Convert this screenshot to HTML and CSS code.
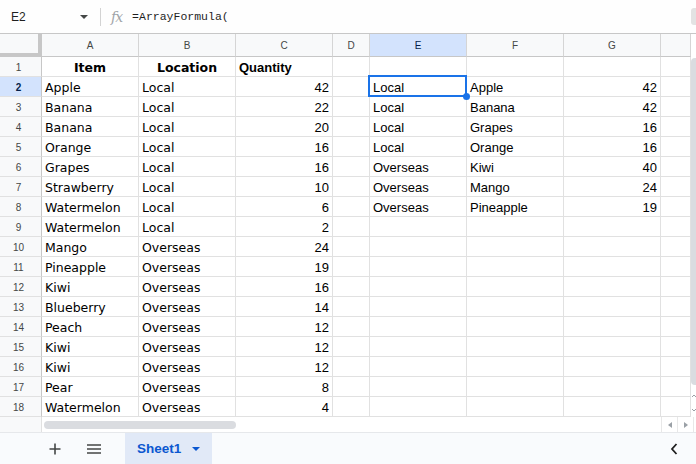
FILE: index.html
```html
<!DOCTYPE html>
<html>
<head>
<meta charset="utf-8">
<link rel="stylesheet" href="styles.css">
</head>
<body>
<div class="app">
  <div class="fbar">
    <div class="namebox">
      <span class="ref">E2</span>
      <svg class="caret" width="8" height="4" viewBox="0 0 8 4"><path d="M0 0h8L4 4z" fill="#444746"/></svg>
    </div>
    <div class="sep"></div>
    <span class="fx">fx</span>
    <span class="formula">=ArrayFormula(</span>
    <div class="fbar-end"></div>
  </div>
  <div class="sheet">
    <div class="grid">
      <div class="corner"></div>
      <div class="h">A</div><div class="h">B</div><div class="h">C</div><div class="h">D</div><div class="h hl">E</div><div class="h">F</div><div class="h">G</div><div class="h"></div>

      <div class="rh">1</div><div class="c v b ctr">Item</div><div class="c v b ctr">Location</div><div class="c a b">Quantity</div><div class="c"></div><div class="c"></div><div class="c"></div><div class="c"></div><div class="c"></div>

      <div class="rh rhl">2</div><div class="c v">Apple</div><div class="c v">Local</div><div class="c n">42</div><div class="c"></div><div class="c a sel">Local</div><div class="c a">Apple</div><div class="c n">42</div><div class="c"></div>
      <div class="rh">3</div><div class="c v">Banana</div><div class="c v">Local</div><div class="c n">22</div><div class="c"></div><div class="c a">Local</div><div class="c a">Banana</div><div class="c n">42</div><div class="c"></div>
      <div class="rh">4</div><div class="c v">Banana</div><div class="c v">Local</div><div class="c n">20</div><div class="c"></div><div class="c a">Local</div><div class="c a">Grapes</div><div class="c n">16</div><div class="c"></div>
      <div class="rh">5</div><div class="c v">Orange</div><div class="c v">Local</div><div class="c n">16</div><div class="c"></div><div class="c a">Local</div><div class="c a">Orange</div><div class="c n">16</div><div class="c"></div>
      <div class="rh">6</div><div class="c v">Grapes</div><div class="c v">Local</div><div class="c n">16</div><div class="c"></div><div class="c a">Overseas</div><div class="c a">Kiwi</div><div class="c n">40</div><div class="c"></div>
      <div class="rh">7</div><div class="c v">Strawberry</div><div class="c v">Local</div><div class="c n">10</div><div class="c"></div><div class="c a">Overseas</div><div class="c a">Mango</div><div class="c n">24</div><div class="c"></div>
      <div class="rh">8</div><div class="c v">Watermelon</div><div class="c v">Local</div><div class="c n">6</div><div class="c"></div><div class="c a">Overseas</div><div class="c a">Pineapple</div><div class="c n">19</div><div class="c"></div>
      <div class="rh">9</div><div class="c v">Watermelon</div><div class="c v">Local</div><div class="c n">2</div><div class="c"></div><div class="c"></div><div class="c"></div><div class="c"></div><div class="c"></div>
      <div class="rh">10</div><div class="c v">Mango</div><div class="c v">Overseas</div><div class="c n">24</div><div class="c"></div><div class="c"></div><div class="c"></div><div class="c"></div><div class="c"></div>
      <div class="rh">11</div><div class="c v">Pineapple</div><div class="c v">Overseas</div><div class="c n">19</div><div class="c"></div><div class="c"></div><div class="c"></div><div class="c"></div><div class="c"></div>
      <div class="rh">12</div><div class="c v">Kiwi</div><div class="c v">Overseas</div><div class="c n">16</div><div class="c"></div><div class="c"></div><div class="c"></div><div class="c"></div><div class="c"></div>
      <div class="rh">13</div><div class="c v">Blueberry</div><div class="c v">Overseas</div><div class="c n">14</div><div class="c"></div><div class="c"></div><div class="c"></div><div class="c"></div><div class="c"></div>
      <div class="rh">14</div><div class="c v">Peach</div><div class="c v">Overseas</div><div class="c n">12</div><div class="c"></div><div class="c"></div><div class="c"></div><div class="c"></div><div class="c"></div>
      <div class="rh">15</div><div class="c v">Kiwi</div><div class="c v">Overseas</div><div class="c n">12</div><div class="c"></div><div class="c"></div><div class="c"></div><div class="c"></div><div class="c"></div>
      <div class="rh">16</div><div class="c v">Kiwi</div><div class="c v">Overseas</div><div class="c n">12</div><div class="c"></div><div class="c"></div><div class="c"></div><div class="c"></div><div class="c"></div>
      <div class="rh">17</div><div class="c v">Pear</div><div class="c v">Overseas</div><div class="c n">8</div><div class="c"></div><div class="c"></div><div class="c"></div><div class="c"></div><div class="c"></div>
      <div class="rh">18</div><div class="c v">Watermelon</div><div class="c v">Overseas</div><div class="c n">4</div><div class="c"></div><div class="c"></div><div class="c"></div><div class="c"></div><div class="c"></div>
    </div>
    <div class="vscroll">
      <div class="vthumb"></div>
      <div class="varrows">
        <svg width="5" height="6" viewBox="0 0 5 6"><path d="M1 4l2-2 2 2" fill="none" stroke="#9aa0a6" stroke-width="1"/></svg>
        <svg width="5" height="6" viewBox="0 0 5 6"><path d="M1 2l2 2 2-2" fill="none" stroke="#9aa0a6" stroke-width="1"/></svg>
      </div>
    </div>
  </div>
  <div class="hscroll">
    <div class="hs-left"></div>
    <div class="hs-track"><div class="hthumb"></div></div>
    <div class="hs-btn"><svg width="4" height="6" viewBox="0 0 4 6"><path d="M4 0v6L0 3z" fill="#9aa0a6"/></svg></div>
    <div class="hs-btn"><svg width="4" height="6" viewBox="0 0 4 6"><path d="M0 0v6l4-3z" fill="#9aa0a6"/></svg></div>
    <div class="hs-end"></div>
  </div>
  <div class="tabs">
    <div class="tab-icon plus">
      <svg width="12" height="12" viewBox="0 0 12 12"><path d="M6 0.5v11M0.5 6h11" stroke="#444746" stroke-width="1.6" fill="none"/></svg>
    </div>
    <div class="tab-icon menu">
      <svg width="14" height="10" viewBox="0 0 14 10"><path d="M0 1h14M0 5h14M0 9h14" stroke="#444746" stroke-width="1.5" fill="none"/></svg>
    </div>
    <div class="tab">
      <span class="tab-name">Sheet1</span>
      <svg width="8" height="4" viewBox="0 0 8 4"><path d="M0 0h8L4 4z" fill="#0b57d0"/></svg>
    </div>
    <div class="spacer"></div>
    <div class="chev">
      <svg width="8" height="12" viewBox="0 0 8 12"><path d="M6.5 1L2 6l4.5 5" stroke="#1f1f1f" stroke-width="1.8" fill="none"/></svg>
    </div>
  </div>
</div>
</body>
</html>
```

FILE: styles.css
```css
html, body {
  margin: 0;
  padding: 0;
}
body {
  width: 696px;
  height: 464px;
  overflow: hidden;
  background: #fff;
  font-family: "Liberation Sans", Arial, sans-serif;
  color: #000;
}
.app {
  display: flex;
  flex-direction: column;
  width: 696px;
  height: 464px;
}

/* formula bar */
.fbar {
  height: 33px;
  flex: none;
  border-bottom: 1px solid #c7c7c7;
  display: flex;
  align-items: center;
  background: #fefefe;
  position: relative;
}
.namebox {
  width: 100px;
  box-sizing: border-box;
  padding: 0 12px 0 10px;
  display: flex;
  align-items: center;
  justify-content: space-between;
}
.ref {
  font-size: 12px;
  color: #1f1f1f;
  padding-left: 1px;
}
.caret {
  display: block;
}
.sep {
  width: 1px;
  height: 18px;
  background: #d3d3d3;
}
.fx {
  margin-left: 10px;
  font-family: "DejaVu Serif", serif;
  font-style: italic;
  font-size: 14px;
  color: #a0a4a8;
  letter-spacing: -1px;
}
.formula {
  margin-left: 10px;
  font-family: "Liberation Mono", monospace;
  font-size: 11.5px;
  color: #1f1f1f;
}
.fbar-end {
  position: absolute;
  right: 0;
  top: 8px;
  width: 5px;
  height: 17px;
  background: #e3e3e3;
  border-radius: 3px 0 0 3px;
}

/* sheet */
.sheet {
  display: flex;
  flex: none;
  height: 383px;
}
.grid {
  display: grid;
  grid-template-columns: 42px 97px 97px 97px 37px 97px 97px 97px 30px;
  grid-template-rows: 23px repeat(18, 20px);
  width: 691px;
}
.grid > div {
  box-sizing: border-box;
  border-right: 1px solid #e1e1e1;
  border-bottom: 1px solid #e1e1e1;
  white-space: nowrap;
  overflow: visible;
}
.corner {
  background: #f8f9fa;
  border-right: 4px solid #c7c7c7 !important;
  border-bottom: 4px solid #c7c7c7 !important;
}
.h {
  background: #f8f9fa;
  border-right-color: #d5d5d5 !important;
  border-bottom-color: #c7c7c7 !important;
  font-size: 10px;
  color: #444746;
  display: flex;
  align-items: center;
  justify-content: center;
}
.hl {
  background: #d3e3fd;
  color: #041e49;
}
.rh {
  background: #f8f9fa;
  border-right-color: #c7c7c7 !important;
  font-size: 10px;
  color: #444746;
  display: flex;
  align-items: center;
  justify-content: center;
  padding-right: 4px;
  padding-top: 1px;
}
.rhl {
  background: #d3e3fd;
  color: #041e49;
  font-weight: bold;
}
.c {
  display: flex;
  align-items: flex-end;
  line-height: 16px;
  padding: 0 3px;
}
.v {
  font-family: "DejaVu Sans", Verdana, sans-serif;
  font-size: 12.5px;
}
.a, .n {
  font-family: "Liberation Sans", Arial, sans-serif;
  font-size: 13px;
}
.n {
  justify-content: flex-end;
}
.b {
  font-weight: bold;
}
.ctr {
  justify-content: center;
}
.sel {
  position: relative;
}
.sel::before {
  content: "";
  position: absolute;
  left: -2px;
  top: -2px;
  right: -1px;
  bottom: -1px;
  border: 2px solid #1a73e8;
}
.sel::after {
  content: "";
  position: absolute;
  right: -4px;
  bottom: -4px;
  width: 7px;
  height: 7px;
  border-radius: 50%;
  background: #1a73e8;
}

/* vertical scrollbar */
.vscroll {
  width: 5px;
  display: flex;
  flex-direction: column;
  background: #fff;
}
.vthumb {
  margin-top: 24px;
  height: 327px;
  background: #dadce0;
  border-radius: 4px 0 0 4px;
}
.varrows {
  margin-top: 8px;
  display: flex;
  flex-direction: column;
  gap: 8px;
}
.varrows svg {
  display: block;
}

/* horizontal scrollbar */
.hscroll {
  height: 15px;
  flex: none;
  display: flex;
  background: #fff;
}
.hs-left {
  width: 41px;
  background: #f8f9fa;
  border-right: 1px solid #e1e1e1;
}
.hs-track {
  width: 619px;
  display: flex;
  align-items: center;
  padding-left: 2px;
  box-sizing: border-box;
}
.hthumb {
  width: 192px;
  height: 8px;
  background: #dadce0;
  border-radius: 4px;
}
.hs-btn {
  width: 16px;
  box-sizing: border-box;
  border-left: 1px solid #e8e8e8;
  display: flex;
  align-items: center;
  justify-content: center;
}
.hs-end {
  flex: 1;
  border-left: 1px solid #e8e8e8;
}

/* tab bar */
.tabs {
  height: 32px;
  flex: none;
  box-sizing: border-box;
  border-top: 1px solid #e6e8eb;
  background: #f9fbfd;
  display: flex;
  align-items: stretch;
}
.tab-icon {
  display: flex;
  align-items: center;
  justify-content: center;
}
.plus {
  width: 12px;
  margin-left: 49px;
}
.menu {
  width: 14px;
  margin-left: 26px;
}
.tab {
  margin-left: 24px;
  width: 87px;
  background: #e1e9f7;
  display: flex;
  align-items: center;
  padding-left: 12px;
  box-sizing: border-box;
  gap: 11px;
}
.tab-name {
  font-size: 13.5px;
  font-weight: bold;
  color: #0b57d0;
}
.spacer {
  flex: 1;
}
.chev {
  width: 8px;
  margin-right: 18px;
  display: flex;
  align-items: center;
}
```
